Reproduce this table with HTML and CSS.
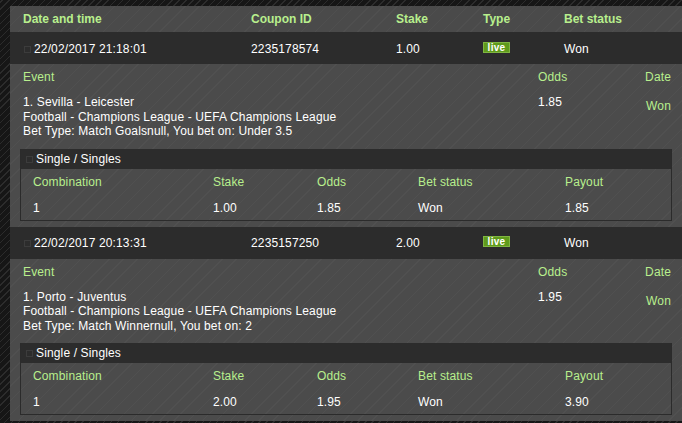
FILE: index.html
```html
<!DOCTYPE html>
<html>
<head>
<meta charset="utf-8">
<link rel="stylesheet" href="styles.css">
</head>
<body>
<div class="wrap">
  <div class="head grid-main">
    <div>Date and time</div>
    <div>Coupon ID</div>
    <div>Stake</div>
    <div>Type</div>
    <div>Bet status</div>
  </div>

  <div class="row grid-main">
    <div class="date"><span class="tog"></span>22/02/2017 21:18:01</div>
    <div>2235178574</div>
    <div>1.00</div>
    <div><span class="live">live</span></div>
    <div>Won</div>
  </div>
  <div class="details">
    <div class="dgrid">
      <div class="lbl">Event</div>
      <div class="lbl">Odds</div>
      <div class="lbl right">Date</div>
      <div class="info">1. Sevilla - Leicester<br>Football - Champions League - UEFA Champions League<br>Bet Type: Match Goalsnull, You bet on: Under 3.5</div>
      <div class="odds">1.85</div>
      <div class="won right">Won</div>
    </div>
    <div class="sub">
      <div class="subhead"><span class="tog"></span>Single / Singles</div>
      <div class="subbody">
        <div class="sgrid lbl"><div>Combination</div><div>Stake</div><div>Odds</div><div>Bet status</div><div>Payout</div></div>
        <div class="sgrid val"><div>1</div><div>1.00</div><div>1.85</div><div>Won</div><div>1.85</div></div>
      </div>
    </div>
  </div>

  <div class="row grid-main">
    <div class="date"><span class="tog"></span>22/02/2017 20:13:31</div>
    <div>2235157250</div>
    <div>2.00</div>
    <div><span class="live">live</span></div>
    <div>Won</div>
  </div>
  <div class="details">
    <div class="dgrid">
      <div class="lbl">Event</div>
      <div class="lbl">Odds</div>
      <div class="lbl right">Date</div>
      <div class="info">1. Porto - Juventus<br>Football - Champions League - UEFA Champions League<br>Bet Type: Match Winnernull, You bet on: 2</div>
      <div class="odds">1.95</div>
      <div class="won right">Won</div>
    </div>
    <div class="sub">
      <div class="subhead"><span class="tog"></span>Single / Singles</div>
      <div class="subbody">
        <div class="sgrid lbl"><div>Combination</div><div>Stake</div><div>Odds</div><div>Bet status</div><div>Payout</div></div>
        <div class="sgrid val"><div>1</div><div>2.00</div><div>1.95</div><div>Won</div><div>3.90</div></div>
      </div>
    </div>
  </div>
</div>
</body>
</html>
```

FILE: styles.css
```css
* { box-sizing: border-box; }
html, body { margin: 0; padding: 0; }
body {
  width: 682px;
  height: 423px;
  overflow: hidden;
  font-family: "Liberation Sans", Arial, sans-serif;
  font-size: 12px;
  letter-spacing: 0.14px;
  color: #ffffff;
  background: repeating-linear-gradient(-45deg, #161616 0, #161616 4px, #2c2c2c 4px, #2c2c2c 5px);
}
.wrap {
  margin-left: 10px;
  padding-top: 6px;
}
.grid-main {
  display: grid;
  grid-template-columns: 228px 145px 87px 81px 1fr;
  padding-left: 13px;
  align-items: center;
}
.head {
  height: 26px;
  font-weight: bold;
  letter-spacing: 0;
  color: #b8ef8d;
  background: repeating-linear-gradient(-45deg, #4a4a4a 0, #4a4a4a 9px, #4f4f4f 9px, #4f4f4f 10px);
}
.row {
  height: 32px;
  background: #2c2c2c;
  padding-top: 1px;
}
.date {
  display: flex;
  align-items: center;
}
.tog {
  display: inline-block;
  width: 7px;
  height: 7px;
  border: 1px solid #3c3c3c;
  margin-right: 3px;
  margin-top: 1px;
}
.date .tog { margin-left: 1px; }
.live {
  display: inline-block;
  width: 27px;
  height: 11px;
  line-height: 9px;
  background: #5f9b1c;
  border: 1px solid #7fb541;
  font-size: 10px;
  font-weight: bold;
  letter-spacing: 0.3px;
  text-align: center;
  color: #ffffff;
  vertical-align: middle;
  position: relative;
  top: -2px;
}
.details {
  background: repeating-linear-gradient(-45deg, #4b4b4b 0, #4b4b4b 9px, #505050 9px, #505050 10px);
  padding: 6px 11px 6px 13px;
}
.dgrid {
  display: grid;
  grid-template-columns: 1fr 107px auto;
  row-gap: 11px;
  align-items: start;
}
.lbl { color: #b8ef8d; line-height: 14px; }
.right { text-align: right; }
.info { line-height: 14.5px; }
.odds { line-height: 14px; }
.won { color: #b8ef8d; line-height: 14px; padding-top: 4px; }
.sub {
  margin: 10px -1px 0 -3px;
  border: 1px solid #2b2b2b;
  border-top: none;
}
.subhead {
  height: 20px;
  background: #2c2c2c;
  display: flex;
  align-items: center;
  padding-left: 5px;
}
.subbody {
  padding: 6px 0 5px 12px;
}
.sgrid {
  display: grid;
  grid-template-columns: 180px 104px 101px 147px 1fr;
  align-items: center;
}
.sgrid.lbl { height: 14px; margin-bottom: 12px; }
.sgrid.val { height: 14px; }
.val { color: #ffffff; }
```
